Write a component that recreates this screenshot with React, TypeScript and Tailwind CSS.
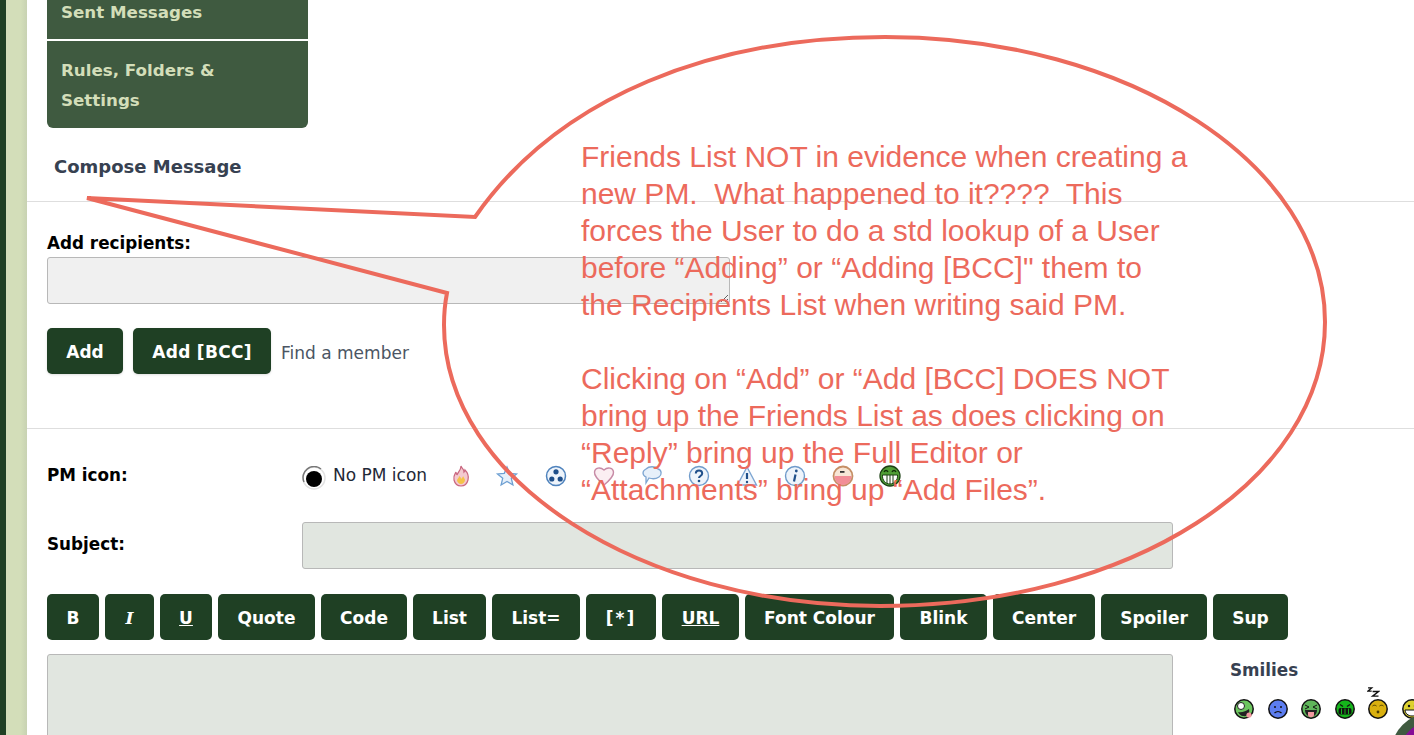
import type { ReactNode } from "react";

const toolbar = [
  { label: "B", className: "w-[52px]" },
  { label: "I", className: "w-[49px] italic font-['DejaVu_Serif',serif]" },
  { label: "U", className: "w-[52px] underline" },
  { label: "Quote", className: "w-[97px]" },
  { label: "Code", className: "w-[86px]" },
  { label: "List", className: "w-[73px]" },
  { label: "List=", className: "w-[88px]" },
  { label: "[*]", className: "w-[70px] tracking-[2px]" },
  { label: "URL", className: "w-[77px] underline" },
  { label: "Font Colour", className: "w-[149px]" },
  { label: "Blink", className: "w-[87px]" },
  { label: "Center", className: "w-[102px]" },
  { label: "Spoiler", className: "w-[106px]" },
  { label: "Sup", className: "w-[75px]" },
];

function GreenButton({ children, className = "" }: { children: ReactNode; className?: string }) {
  return (
    <button className={`h-[46px] shrink-0 rounded-[5px] bg-[#1f4024] pt-[3px] text-center text-[17px] font-bold text-white ${className}`}>
      {children}
    </button>
  );
}

function Icon({ children, viewBox = "0 0 22 22" }: { children: ReactNode; viewBox?: string }) {
  return (
    <svg viewBox={viewBox} className="h-[22px] w-[22px] shrink-0 overflow-visible">
      {children}
    </svg>
  );
}

const pmIcons = [
  <Icon key="fire">
    <path d="M11 1c1 3 3 3 3 6 1-1 1-2 1-2 3 3 4 6 3 10-1 4-4 6-7 6s-6-2-7-6c-1-4 1-6 2-8 0 2 1 2 1 3 1-3 4-5 4-9z" fill="#f4c9cf" stroke="#c9667f" strokeWidth="1.2" />
    <path d="M7 15c1-2 2-2 2-4 1 1 2 1 2 3 1-1 2-2 2-3 1 2 2 3 2 4 0 2-2 4-4 4s-4-2-4-4z" fill="#f5c348" />
  </Icon>,
  <Icon key="star" viewBox="2 0 22 22">
    <path d="M11 2l2.7 6.3 6.8.6-5.2 4.4 1.6 6.7L11 16.4 5.1 20l1.6-6.7L1.5 8.9l6.8-.6z" fill="#e6f0fa" stroke="#6d9fd2" strokeWidth="1.3" />
  </Icon>,
  <Icon key="radio">
    <circle cx="11" cy="11" r="9.5" fill="#eef4fb" stroke="#4f83bd" strokeWidth="1.5" />
    <circle cx="11" cy="6.8" r="2.6" fill="#1f4f8a" />
    <circle cx="6.8" cy="14" r="2.6" fill="#1f4f8a" />
    <circle cx="15.2" cy="14" r="2.6" fill="#1f4f8a" />
  </Icon>,
  <Icon key="heart">
    <path d="M11 20C5 15 1 11 1.500 7 2 3 7 1.500 11 5c4-3.500 9-2 9.500 2C21 11 17 15 11 20z" fill="#fbeef2" stroke="#c78ba6" strokeWidth="1.4" />
  </Icon>,
  <Icon key="bubble">
    <path d="M5 4c3-3 9-3 12 0 4 1 4 6 1 8-3 2-7 2-10 1l-3 5 0-6C1 10 1 6 5 4z" fill="#e7f0fa" stroke="#7ea6d2" strokeWidth="1.3" />
  </Icon>,
  <Icon key="question">
    <circle cx="11" cy="11" r="9.500" fill="#eef4fb" stroke="#6f9bcb" strokeWidth="1.4" />
    <path d="M7.800 8.500c0-4 6.400-4 6.400 0 0 2.500-3.200 2.500-3.200 4.500" fill="none" stroke="#1f4f8a" strokeWidth="2" />
    <circle cx="11" cy="16" r="1.300" fill="#1f4f8a" />
  </Icon>,
  <Icon key="warn">
    <path d="M11 2l9.500 18h-19z" fill="#eef4fb" stroke="#7ea6d2" strokeWidth="1.4" />
    <path d="M11 8v6" stroke="#1f4f8a" strokeWidth="2.200" />
    <circle cx="11" cy="17" r="1.200" fill="#1f4f8a" />
  </Icon>,
  <Icon key="info">
    <circle cx="11" cy="11" r="9.500" fill="#eef4fb" stroke="#6f9bcb" strokeWidth="1.4" />
    <path d="M11.500 9.500l-1.500 7" stroke="#1f4f8a" strokeWidth="2.200" />
    <circle cx="12.300" cy="6" r="1.400" fill="#1f4f8a" />
  </Icon>,
  <Icon key="tongue">
    <circle cx="11" cy="11" r="9.500" fill="#f7e6d6" stroke="#c58f66" strokeWidth="1.800" />
    <path d="M2.500 11h17c0 5-4 9-8.500 9s-8.500-4-8.500-9z" fill="#f28e97" />
    <rect x="8" y="6" width="4.500" height="1.800" fill="#333" />
  </Icon>,
  <Icon key="grin">
    <circle cx="11" cy="11" r="10" fill="#4f9e35" stroke="#1c4014" strokeWidth="1.300" />
    <path d="M3.500 10h15c.5 5-3 9-7.500 9s-8-4-7.500-9z" fill="#fff" stroke="#1c4014" />
    <path d="M8 10v8M11 10v9M14 10v8" stroke="#1c4014" />
    <path d="M5 7c1-2 3-2 4 0M13 7c1-2 3-2 4 0" fill="none" stroke="#123009" strokeWidth="1.300" />
  </Icon>,
];

function Face({ fill, children }: { fill: string; children: ReactNode }) {
  return (
    <svg viewBox="0 0 20 20" className="h-[20px] w-[20px] shrink-0">
      <circle cx="10" cy="10" r="9.200" fill={fill} stroke="#111" strokeWidth="1.500" />
      {children}
    </svg>
  );
}

const smilies = [
  <Face key="a" fill="#6cc55e">
    <circle cx="7" cy="7" r="3.500" fill="#fff" stroke="#222" />
    <path d="M4 13c4 1 8-1 11-3 1 4-1 8-6 7-2 0-4-2-5-4z" fill="#222" />
    <circle cx="15" cy="16" r="2.600" fill="#f29aa0" />
  </Face>,
  <Face key="b" fill="#5c7df0">
    <circle cx="7" cy="8" r="1" fill="#111" />
    <circle cx="13" cy="8" r="1" fill="#111" />
    <path d="M6.500 14c2-2 5-2 7 0" fill="none" stroke="#111" strokeWidth="1.200" />
  </Face>,
  <Face key="c" fill="#5fb55a">
    <path d="M4 6l4 2-4 2M16 6l-4 2 4 2" fill="none" stroke="#111" />
    <path d="M4 11h12c0 4-3 7-6 7s-6-3-6-7z" fill="#222" />
    <path d="M7 13h6v3c0 3-6 3-6 0z" fill="#f29aa0" />
  </Face>,
  <Face key="d" fill="#15b41b">
    <path d="M5 5.500l3 2M15 5.500l-3 2" stroke="#111" strokeWidth="1.300" />
    <rect x="3.500" y="9" width="13" height="6.500" rx="2" fill="#111" />
    <path d="M6.500 9.500v5.500M10 9.500v5.500M13.500 9.500v5.500" stroke="#15b41b" />
  </Face>,
  <Face key="e" fill="#d9b00f">
    <path d="M4.500 7c1-1 3-1 4 0M11.500 7c1-1 3-1 4 0" fill="none" stroke="#4a3b00" />
    <circle cx="10" cy="13" r="1.400" fill="#4a3b00" />
  </Face>,
  <Face key="f" fill="#dcd030">
    <circle cx="7" cy="7" r="1.200" fill="#111" />
    <circle cx="13" cy="7" r="1.200" fill="#111" />
    <path d="M3 11h14c0 3-3 6-7 6s-7-3-7-6z" fill="#fff" stroke="#111" />
  </Face>,
];

function Sleepy() {
  return (
    <div className="relative h-[20px] w-[20px] shrink-0">
      {smilies[4]}
      <svg viewBox="0 0 14 11" className="absolute left-[-1px] top-[-12px] h-[10px] w-[13px]">
        <path d="M1 1h4L1 4.500h4M6 5h6.500L6 10h6.500" fill="none" stroke="#111" strokeWidth="1.500" />
      </svg>
    </div>
  );
}

function Annotation() {
  return (
    <div className="pointer-events-none absolute inset-0">
      <svg viewBox="0 0 1414 735" className="absolute inset-0 h-[735px] w-[1414px]">
        <path
          d="M87 198 L475 217 C 560 95 715 37 885 37 C 1130 37 1325 165 1325 322 C 1325 480 1130 606 880 606 C 640 606 444 480 444 325 C 444 313 445 303 447 293 Z"
          fill="none"
          stroke="#ec6a5c"
          strokeWidth="4"
        />
      </svg>
      <div className="absolute left-[581px] top-[138px] whitespace-pre font-['Liberation_Sans',Arial,sans-serif] text-[30px] leading-[37px] text-[#ec6a5c]">
        {"Friends List NOT in evidence when creating a\nnew PM.  What happened to it????  This\nforces the User to do a std lookup of a User\nbefore “Adding” or “Adding [BCC]\" them to\nthe Recipients List when writing said PM.\n\nClicking on “Add” or “Add [BCC] DOES NOT\nbring up the Friends List as does clicking on\n“Reply” bring up the Full Editor or\n“Attachments” bring up “Add Files”."}
      </div>
    </div>
  );
}

export default function App() {
  return (
    <div className="relative flex h-[735px] w-[1414px] overflow-hidden bg-white font-['DejaVu_Sans',sans-serif]">
      <div className="w-[6px] shrink-0 bg-[#1f4024]" />
      <div className="w-[21px] shrink-0 bg-gradient-to-r from-[#d3deb9] from-70% to-[#c8d2b2]" />

      <main className="flex min-w-0 flex-1 flex-col">
        {/* Inbox menu */}
        <nav className="ml-[20px] w-[261px] shrink-0 text-[16.7px] font-bold leading-[30px] text-[#d3deb9]">
          <div className="flex h-[39px] items-end bg-[#3f5a40] px-[14px] pb-[12px]">Sent Messages</div>
          <div className="mt-[2px] h-[87px] rounded-b-[6px] bg-[#3f5a40] px-[14px] pt-[14px]">
            Rules, Folders &amp;
            <br />
            Settings
          </div>
        </nav>

        <div className="h-[74px] shrink-0 border-b border-[#dedede] pl-[27px] pt-[27px] text-[18px] font-bold leading-[24px] text-[#374151]">
          Compose Message
        </div>

        {/* Recipients */}
        <section className="flex h-[227px] shrink-0 flex-col border-b border-[#dedede] pl-[20px] pt-[30px]">
          <label className="text-[16.8px] font-bold leading-[22px] text-black">Add recipients:</label>
          <textarea className="mt-[3px] h-[47px] w-[683px] shrink-0 rounded-[3px] border border-[#b8b8b8] bg-[#f0f0f0]" />
          <div className="mt-[24px] flex items-center">
            <GreenButton className="w-[76px] shadow-sm">Add</GreenButton>
            <GreenButton className="ml-[10px] w-[138px] tracking-[0.3px] shadow-sm">Add [BCC]</GreenButton>
            <a className="ml-[10px] mt-[5px] text-[17px] text-[#4b5563]">Find a member</a>
          </div>
        </section>

        {/* PM icon */}
        <section className="flex h-[93px] shrink-0 items-center pl-[20px]">
          <span className="w-[255px] text-[16.8px] font-bold text-black">PM icon:</span>
          <div className="flex items-center">
            <svg viewBox="0 0 24 24" className="mt-[4px] h-[24px] w-[24px] shrink-0">
              <circle cx="12" cy="12" r="11" fill="#fff" stroke="#e2e2e2" strokeWidth="1.500" />
              <path d="M2 16A11 11 0 0 1 19 3" fill="none" stroke="#777" strokeWidth="1.500" />
              <circle cx="12" cy="13" r="8" fill="#000" />
            </svg>
            <span className="ml-[7px] w-[117px] text-[17px] text-[#1f2937]">No PM icon</span>
            <div className="flex items-center gap-[25.700px]">{pmIcons}</div>
          </div>
        </section>

        {/* Subject */}
        <section className="flex h-[47px] shrink-0 items-center pl-[20px]">
          <span className="w-[255px] pb-[2px] text-[16.8px] font-bold text-black">Subject:</span>
          <input className="h-[47px] w-[871px] rounded-[3px] border border-[#b8b8b8] bg-[#e1e6e0]" />
        </section>

        {/* BBCode buttons */}
        <div className="mt-[25px] flex shrink-0 gap-[6px] pl-[20px]">
          {toolbar.map((b) => (
            <GreenButton key={b.label} className={b.className}>
              {b.label}
            </GreenButton>
          ))}
        </div>

        {/* Editor and smilies */}
        <section className="mt-[14px] flex shrink-0 pl-[20px]">
          <textarea className="h-[120px] w-[1126px] shrink-0 resize-none rounded-[3px] border border-[#b8b8b8] bg-[#e1e6e0]" />
          <div className="ml-[57px] pt-[5px]">
            <div className="text-[16.8px] font-bold leading-[22px] text-[#374151]">Smilies</div>
            <div className="ml-[4px] mt-[18px] flex w-[200px] gap-[13.500px]">
              {smilies[0]}
              {smilies[1]}
              {smilies[2]}
              {smilies[3]}
              <Sleepy />
              {smilies[5]}
            </div>
          </div>
        </section>
      </main>

      {/* floating badge, cut off by the corner */}
      <div className="absolute left-[1391px] top-[713px] h-[80px] w-[80px] rounded-full bg-[#3f5a40] p-[9px]">
        <div className="h-full w-full rounded-full bg-[#860d96]" />
      </div>

      <Annotation />
    </div>
  );
}
